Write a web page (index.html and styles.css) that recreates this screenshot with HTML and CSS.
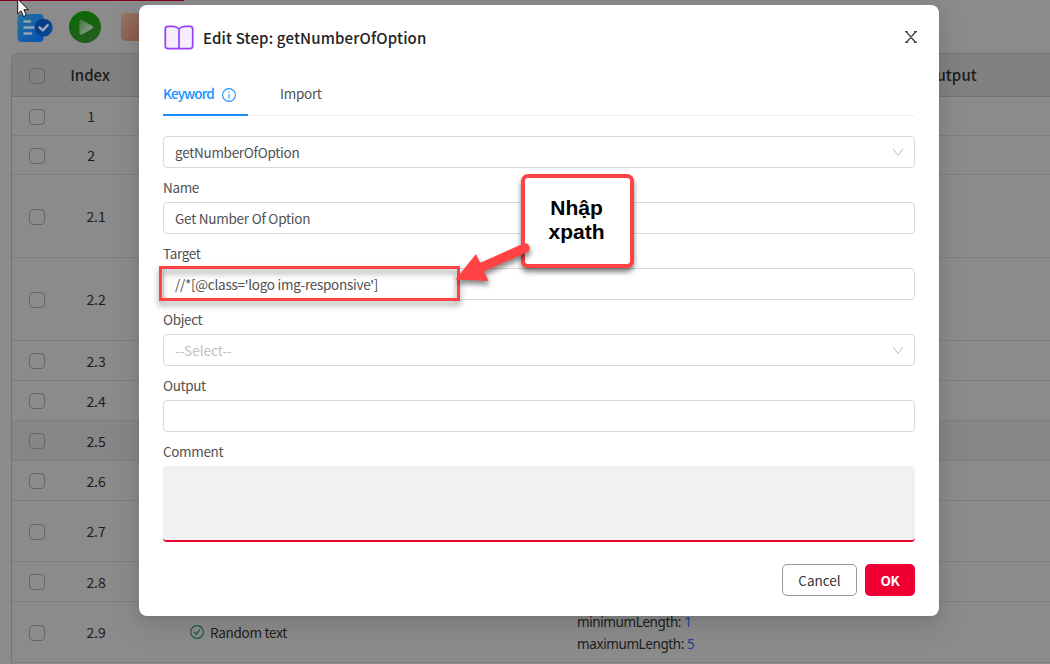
FILE: index.html
```html
<!DOCTYPE html>
<html lang="en">
<head>
<meta charset="utf-8">
<title>Edit Step</title>
<link rel="stylesheet" href="styles.css">
</head>
<body>
<div class="page">
  <div class="progress"></div>
  <div class="toolbar">
    <svg class="tool-doc" width="36" height="30" viewBox="0 0 36 30">
      <defs>
        <linearGradient id="doc" x1="0" y1="0" x2="1" y2="1"><stop offset="0" stop-color="#2674a1"/><stop offset="1" stop-color="#0750b0"/></linearGradient>
        <linearGradient id="badge" x1="0" y1="0" x2="1" y2="1"><stop offset="0" stop-color="#06357d"/><stop offset="1" stop-color="#0a4e9d"/></linearGradient>
      </defs>
      <rect x=".5" y="2" width="26" height="28" rx="4" fill="url(#doc)"/>
      <path d="M7.500 9.500h5.500M7.500 15.500h9M7.500 21.500h6.500" stroke="#8fa5af" stroke-width="2.600" stroke-linecap="round"/>
      <circle cx="26.700" cy="15.700" r="9" fill="url(#badge)"/>
      <path d="M22.500 15.400l3.200 3 5-5.200" fill="none" stroke="#a2adb9" stroke-width="2.300" stroke-linecap="round" stroke-linejoin="round"/>
    </svg>
    <svg class="tool-play" width="32" height="32" viewBox="0 0 32 32">
      <defs>
        <linearGradient id="run" x1="0" y1="0" x2=".5" y2="1"><stop offset="0" stop-color="#086b00"/><stop offset="1" stop-color="#235e1d"/></linearGradient>
        <linearGradient id="tri" x1="0" y1="0" x2="1" y2="1"><stop offset="0" stop-color="#4a7d46"/><stop offset="1" stop-color="#929c91"/></linearGradient>
      </defs>
      <circle cx="16" cy="16" r="16" fill="url(#run)"/>
      <path d="M12.200 10.500v11.500l10-5.800z" fill="url(#tri)" stroke="url(#tri)" stroke-width="3.500" stroke-linejoin="round"/>
    </svg>
    <div class="tool-stop"></div>
  </div>
  <div class="table">
    <div class="row head"><i class="check"></i><span class="index">Index</span><span class="out">Output</span></div>
    <div class="row h39"><i class="check"></i><span class="index">1</span></div>
    <div class="row h39"><i class="check"></i><span class="index">2</span></div>
    <div class="row h83"><i class="check"></i><span class="index sub">2.1</span></div>
    <div class="row h83"><i class="check"></i><span class="index sub">2.2</span></div>
    <div class="row h40"><i class="check"></i><span class="index sub">2.3</span></div>
    <div class="row h40"><i class="check"></i><span class="index sub">2.4</span></div>
    <div class="row h40 hover"><i class="check"></i><span class="index sub">2.5</span></div>
    <div class="row h40"><i class="check"></i><span class="index sub">2.6</span></div>
    <div class="row h61"><i class="check"></i><span class="index sub">2.7</span></div>
    <div class="row h40"><i class="check"></i><span class="index sub">2.8</span></div>
    <div class="row h61"><i class="check"></i><span class="index sub">2.9</span>
      <span class="keyword"><svg width="14" height="14" viewBox="0 0 14 14" fill="none" stroke="#1a5a3b" stroke-width="1.200"><circle cx="7" cy="7" r="6.300"/><path d="M4.300 7l2 2.300 3.500-4.700"/></svg><span class="keyword-name">Random text</span></span>
      <span class="params"><span class="param">minimumLength: <b>1</b></span><span class="param">maximumLength: <b>5</b></span></span>
    </div>
  </div>
</div>

<div class="modal">
  <div class="modal-head">
    <svg width="30" height="25" viewBox="0 0 30 25" fill="#f5eefe" stroke="#9740fa" stroke-width="1.700" stroke-linejoin="round"><path d="M15 4Q12.500 1.300 9 1.300H4Q1.300 1.300 1.300 4V21Q1.300 23.600 4 23.600H26Q28.700 23.600 28.700 21V4Q28.700 1.300 26 1.300H21Q17.500 1.300 15 4V23.600"/></svg>
    <span class="title">Edit Step: getNumberOfOption</span>
    <svg class="close" width="12" height="12" viewBox="0 0 12 12" fill="none" stroke="#444" stroke-width="1.300"><path d="M0 .7h2.700M9 .7h3M0 11.300h3M9 11.300h3M1.300.7L10.500 11.300M10.700.7L1.500 11.300"/></svg>
  </div>
  <div class="tabs">
    <div class="tab active"><span>Keyword</span><svg width="14" height="14" viewBox="0 0 14 14" fill="none" stroke="#1890ff" stroke-width="1.100"><circle cx="7" cy="7" r="6.400"/><path d="M7 6v4.500M7 3.500v1.300"/></svg></div>
    <div class="tab import">Import</div>
  </div>
  <div class="form">
    <div class="field"><span class="v-select">getNumberOfOption</span><svg class="chev" width="12" height="9" viewBox="0 0 12 9" fill="none" stroke="#bfbfbf"><path d="M1.200 1L6 7.500 10.800 1"/></svg></div>
    <div class="label">Name</div>
    <div class="field"><span class="v-name">Get Number Of Option</span></div>
    <div class="label">Target</div>
    <div class="field"><span class="v-target">//*[@class='logo img-responsive']</span></div>
    <div class="label">Object</div>
    <div class="field"><span class="placeholder">--Select--</span><svg class="chev" width="12" height="9" viewBox="0 0 12 9" fill="none" stroke="#bfbfbf"><path d="M1.200 1L6 7.500 10.800 1"/></svg></div>
    <div class="label">Output</div>
    <div class="field"></div>
    <div class="label">Comment</div>
    <div class="comment"></div>
  </div>
  <div class="actions"><div class="btn cancel">Cancel</div><div class="btn ok">OK</div></div>
</div>

<div class="highlight"></div>
<div class="callout">Nhập<br>xpath</div>
<svg class="arrow" width="90" height="60" viewBox="450 235 90 60"><path d="M525 248L480 268" stroke="#ff4344" stroke-width="9.500" stroke-linecap="round"/><path d="M455.500 279.500L476 254L488.500 281Z" fill="#ff4344"/></svg>
<svg class="pointer" width="14" height="20" viewBox="0 0 14 20"><path d="M.7-2V14L4 10.800 6.500 16.500 9.300 15.300 6.900 9.700H11.300L.7-1Z" fill="#fff" stroke="#111" stroke-width="1"/></svg>
</body>
</html>
```

FILE: styles.css
```css
* { box-sizing: border-box; }
body {
  margin: 0;
  width: 1050px;
  height: 664px;
  overflow: hidden;
  position: relative;
  background: #8b8b8b;
  font-family: "Noto Sans CJK SC", "Noto Sans", sans-serif;
  font-size: 13.5px;
  letter-spacing: -.28px;
  color: #505050;
}
svg { display: block; flex: none; }

/* Page behind the dialog, in its dimmed colours */
.page { height: 664px; overflow: hidden; color: #1c1c1c; }
.progress { width: 184px; height: 1px; background: #85001d; }
.toolbar { display: flex; align-items: flex-start; height: 52px; padding: 10px 0 0 17px; }
.tool-doc { margin-top: 1px; }
.tool-play { margin-left: 16px; }
.tool-stop { width: 32px; height: 28px; margin: 2px 0 0 20px; border-radius: 5px; background: linear-gradient(135deg, #967469, #86513e); }
.table { margin-left: 11px; border: solid #747474; border-width: 1px 0 0 1px; border-radius: 8px 0 0 0; overflow: hidden; }
.row { display: flex; align-items: center; border-bottom: 1px solid #7e7e7e; padding-left: 17px; line-height: 20px; flex: none; }
.head { height: 43px; padding-top: 1px; background: #818181; border-color: #747474; font-weight: 500; font-size: 15px; letter-spacing: 0; }
.h39 { height: 39px; padding-top: 2px; }
.h40 { height: 40px; }
.h61 { height: 61px; padding-top: 2px; }
.h83 { height: 83px; padding-top: 1px; }
.hover { background: #868686; }
.check { width: 16px; height: 16px; border: 1px solid #666; border-radius: 4px; flex: none; }
.index { width: 60px; margin-left: 16px; text-align: center; font-size: 14px; letter-spacing: -.1px; }
.head .index { width: 64px; margin-left: 13px; font-size: 15px; letter-spacing: 0; }
.head .index, .head .out, .h39 .index, .h83 .index, .h61 .index, .keyword-name { padding-bottom: 2px; }
.sub { padding-left: 10px; }
.out { margin-left: 803px; letter-spacing: .1px; }
.keyword { display: flex; gap: 6px; align-items: center; width: 387px; margin-left: 69px; }
.keyword svg { margin-top: -2px; }
.params { display: flex; flex-direction: column; line-height: 22px; }
.param { font-family: "Noto Sans", sans-serif; font-size: 13.5px; letter-spacing: -.4px; white-space: nowrap; }
.param b { font-weight: 400; color: #1d3f95; }

/* Dialog */
.modal {
  position: absolute;
  left: 139px;
  top: 5px;
  width: 800px;
  height: 611px;
  padding: 0 24px;
  border-radius: 8px;
  background: #fff;
  box-shadow: 0 6px 16px rgba(0,0,0,.08), 0 3px 6px -4px rgba(0,0,0,.12), 0 9px 28px 8px rgba(0,0,0,.05);
}
.modal-head { display: flex; align-items: center; height: 66px; padding-left: 1px; }
.modal-head svg { margin-top: -1px; }
.title { margin-left: 9px; font-size: 15px; font-weight: 500; letter-spacing: .16px; color: #222; line-height: 22px; }
.modal-head .close { margin: -2px -2px 0 auto; }
.tabs { display: flex; height: 45px; border-bottom: 1px solid #f0f0f0; }
.tab { height: 45px; line-height: 44px; }
.active { display: flex; width: 85px; gap: 8px; color: #1890ff; border-bottom: 2px solid #1890ff; font-weight: 500; letter-spacing: -.9px; }
.active svg { margin-top: 17px; }
.import { margin-left: 32px; }
.form { padding-top: 20px; }
.field { display: flex; align-items: center; justify-content: space-between; height: 32px; padding: 0 10px 0 11px; border: 1px solid #d9d9d9; border-radius: 4px; line-height: 20px; white-space: pre; }
.chev { margin-top: 0; }
.label { height: 34px; line-height: 38px; letter-spacing: -.35px; }
.v-name { letter-spacing: -.24px; }
.v-target { letter-spacing: -.27px; }
.placeholder { color: #bfbfbf; letter-spacing: 0; }
.comment { height: 76px; border-radius: 4px; background: #f1f1f1; border-bottom: 2px solid #ec0031; }
.actions { display: flex; justify-content: flex-end; gap: 8px; margin-top: 22px; }
.btn { height: 32px; line-height: 32px; border-radius: 5px; text-align: center; }
.cancel { width: 75px; border: 1px solid #999; color: #333; letter-spacing: 0; line-height: 30px; }
.ok { width: 50px; background: #f00032; color: #fff; font-weight: 700; }

/* Annotations over the dialog */
.highlight { position: absolute; left: 159px; top: 266px; width: 301px; height: 35px; border: 3px solid #ff4344; filter: drop-shadow(0 4px 3px rgba(0,0,0,.45)); }
.callout {
  position: absolute;
  left: 521px;
  top: 174px;
  width: 113px;
  height: 94px;
  padding: 18px 2px 0 0;
  border: 4px solid #ff4344;
  border-radius: 7px;
  background: #fff;
  box-shadow: 0 4px 5px rgba(0,0,0,.5);
  font: bold 21px/24px "Liberation Sans", sans-serif;
  letter-spacing: 0;
  color: #000;
  text-align: center;
}
.arrow { position: absolute; left: 450px; top: 235px; filter: drop-shadow(1px 4px 2.500px rgba(0,0,0,.45)); }
.pointer { position: absolute; left: 17px; top: 0; }
```
